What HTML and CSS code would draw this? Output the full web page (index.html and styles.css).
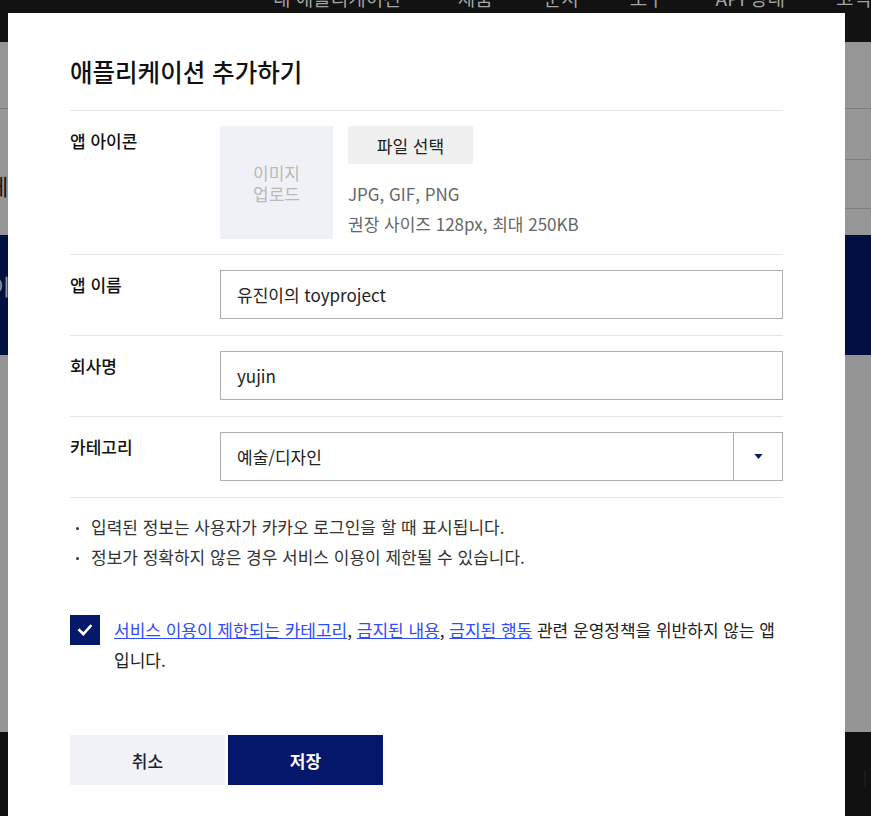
FILE: index.html
```html
<!DOCTYPE html>
<html lang="ko">
<head>
<meta charset="utf-8">
<title>애플리케이션 추가하기</title>
<link rel="stylesheet" href="styles.css">
</head>
<body>
<div class="page">
  <header class="gnb">
    <nav class="gnb-menu">
      <span class="gnb-first">내 애플리케이션</span>
      <span>제품</span>
      <span>문서</span>
      <span>도구</span>
      <span>API 상태</span>
      <span>고객센터</span>
    </nav>
  </header>
  <div class="sub">
    <div class="sub-top"></div>
    <div class="sub-mid"></div>
    <div class="sub-bottom"><span class="cut">에</span></div>
  </div>
  <div class="hero"><span class="cut cut-light">이</span></div>
  <div class="content"></div>
  <footer class="foot"><span class="scroll-mark"></span></footer>
</div>

<div class="modal">
  <h2 class="modal-title">애플리케이션 추가하기</h2>

  <div class="row">
    <div class="label">앱 아이콘</div>
    <div class="icon-field">
      <div class="icon-box">이미지<br>업로드</div>
      <div class="icon-info">
        <button class="file-btn" type="button">파일 선택</button>
        <p class="hint">JPG, GIF, PNG<br>권장 사이즈 128px, 최대 250KB</p>
      </div>
    </div>
  </div>

  <div class="row row-input">
    <div class="label">앱 이름</div>
    <div class="input">유진이의 toyproject</div>
  </div>

  <div class="row row-input">
    <div class="label">회사명</div>
    <div class="input">yujin</div>
  </div>

  <div class="row row-input">
    <div class="label">카테고리</div>
    <div class="select">
      <span class="select-value">예술/디자인</span>
      <span class="select-arrow">
        <svg width="10" height="6" viewBox="0 0 10 6"><path d="M0 0 H10 L5 6 Z" fill="#0a1a5c"/></svg>
      </span>
    </div>
  </div>

  <ul class="notes">
    <li>입력된 정보는 사용자가 카카오 로그인을 할 때 표시됩니다.</li>
    <li>정보가 정확하지 않은 경우 서비스 이용이 제한될 수 있습니다.</li>
  </ul>

  <div class="agree">
    <span class="checkbox">
      <svg width="30" height="30" viewBox="0 0 30 30"><path d="M9.5 15.2 L13.3 19 L20.5 11" fill="none" stroke="#fff" stroke-width="2.6" stroke-linecap="square"/></svg>
    </span>
    <p class="agree-text"><a href="#">서비스 이용이 제한되는 카테고리</a>, <a href="#">금지된 내용</a>, <a href="#">금지된 행동</a> 관련 운영정책을 위반하지 않는 앱 입니다.</p>
  </div>

  <div class="actions">
    <button class="btn btn-cancel" type="button">취소</button>
    <button class="btn btn-save" type="button">저장</button>
  </div>
</div>
</body>
</html>
```

FILE: styles.css
```css
* { box-sizing: border-box; }

html, body {
  margin: 0;
  padding: 0;
  height: 100%;
  overflow: hidden;
}

body {
  font-family: "Noto Sans CJK KR", "Noto Sans", sans-serif;
  color: #222;
  background: #111;
}

.page {
  width: 871px;
  height: 816px;
  display: flex;
  flex-direction: column;
}

/* dimmed page behind modal */
.gnb {
  height: 42px;
  flex: none;
  background: #121212;
  overflow: hidden;
}

.gnb-menu {
  display: flex;
  gap: 51px;
  padding-left: 273px;
  margin-top: -14px;
  font-size: 19px;
  line-height: 24px;
  color: #a3a3a3;
  white-space: nowrap;
}

.gnb-first {
  margin-right: 6px;
}

.sub {
  height: 193px;
  flex: none;
  background: #969696;
  display: flex;
  flex-direction: column;
  overflow: hidden;
}

.sub-top {
  height: 67px;
  border-bottom: 1px solid #7d7d7d;
}

.sub-mid {
  height: 51px;
  margin-left: 24px;
  border-bottom: 1px solid #7d7d7d;
}

.sub-bottom {
  height: 49px;
  border-bottom: 1px solid #7d7d7d;
  border-image: linear-gradient(to right, transparent 24px, #7d7d7d 24px) 1;
}

.cut {
  display: inline-block;
  margin-left: -12px;
  margin-top: 10px;
  font-size: 22px;
  line-height: 30px;
  color: #111;
}

.hero {
  height: 120px;
  flex: none;
  background: #021041;
  padding-top: 35px;
}

.cut-light {
  margin-left: -10px;
  margin-top: 0;
  color: #8f93a6;
}

.content {
  height: 377px;
  flex: none;
  background: #959595;
}

.foot {
  flex: 1;
  background: #111;
  display: flex;
  justify-content: flex-end;
  padding: 38px 5px 0 0;
}

.scroll-mark {
  width: 2px;
  height: 17px;
  background: #1a1a1a;
}

/* modal (sits over the page) */
.modal {
  position: absolute;
  left: 8px;
  top: 13px;
  width: 837px;
  height: 820px;
  background: #fff;
  padding: 0 62px;
}

.modal-title {
  margin: 0;
  padding: 44px 0 23px;
  font-size: 24.5px;
  line-height: 30px;
  font-weight: 500;
  color: #111;
  border-bottom: 1px solid #e6e6e6;
}

.row {
  display: grid;
  grid-template-columns: 150px 1fr;
  padding: 15px 0;
  border-bottom: 1px solid #e6e6e6;
}

.row-input {
  padding-bottom: 16px;
}

.label {
  font-size: 17px;
  line-height: 30px;
  font-weight: 500;
  color: #111;
}

.icon-field {
  display: flex;
  gap: 15px;
}

.icon-box {
  width: 113px;
  height: 113px;
  background: #f0f1f6;
  color: #b9b9b9;
  font-size: 17px;
  line-height: 21px;
  display: flex;
  align-items: center;
  justify-content: center;
  text-align: center;
}

.icon-info {
  display: flex;
  flex-direction: column;
  align-items: flex-start;
}

.file-btn {
  width: 125px;
  height: 38px;
  border: 0;
  background: #f0f0f0;
  font-family: inherit;
  font-size: 17px;
  color: #222;
  padding: 0;
}

.hint {
  margin: 15px 0 0;
  font-size: 17px;
  line-height: 30px;
  color: #666;
}

.input {
  height: 49px;
  border: 1px solid #adadad;
  padding: 0 16px;
  font-size: 17px;
  line-height: 47px;
  color: #222;
}

.select {
  height: 49px;
  border: 1px solid #adadad;
  display: flex;
  font-size: 17px;
  color: #222;
}

.select-value {
  flex: 1;
  padding: 0 16px;
  line-height: 47px;
}

.select-arrow {
  width: 49px;
  border-left: 1px solid #adadad;
  display: flex;
  align-items: center;
  justify-content: center;
  padding-left: 1px;
}

.select-arrow svg {
  width: 9px;
  height: 5px;
}

.notes {
  list-style: none;
  margin: 0;
  padding: 14px 0 0;
  font-size: 17px;
  line-height: 30px;
  color: #333;
}

.notes li {
  display: flex;
  align-items: center;
}

.notes li::before {
  content: "";
  flex: none;
  width: 3px;
  height: 3px;
  border-radius: 50%;
  background: #333;
  margin: 2px 12px 0 6px;
}

.agree {
  margin-top: 43px;
  display: flex;
  gap: 14px;
  align-items: flex-start;
}

.checkbox {
  flex: none;
  width: 30px;
  height: 30px;
  background: #06186a;
  display: block;
}

.checkbox svg { display: block; }

.agree-text {
  margin: 0;
  font-size: 17px;
  line-height: 30px;
  color: #222;
}

.agree-text a {
  color: #2f4bff;
  text-decoration: underline;
}

.actions {
  margin-top: 60px;
  display: flex;
  gap: 3px;
}

.btn {
  width: 155px;
  height: 50px;
  border: 0;
  padding: 0;
  font-family: inherit;
  font-size: 17px;
  font-weight: 500;
}

.btn-cancel {
  background: #f1f2f8;
  color: #1c1f3a;
}

.btn-save {
  background: #04176b;
  color: #fff;
  font-weight: 700;
}
```
